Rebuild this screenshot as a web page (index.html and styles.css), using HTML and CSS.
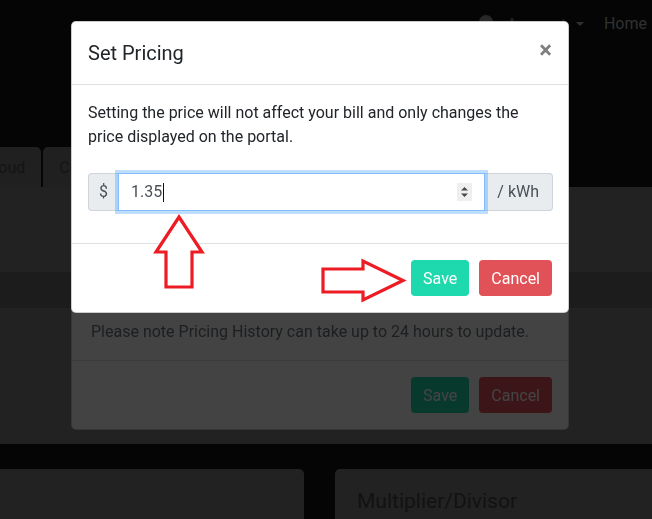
FILE: index.html
```html
<!DOCTYPE html>
<html lang="en">
<head>
<meta charset="utf-8">
<title>Set Pricing</title>
<link rel="stylesheet" href="styles.css">
</head>
<body>
<div class="page">
  <header class="navbar">
    <nav class="nav-right">
      <span class="user-icon"></span>
      <span class="nav-user">Account</span>
      <span class="caret"></span>
      <span class="nav-link">Home</span>
    </nav>
  </header>
  <div class="tabs">
    <div class="tab">Cloud</div>
    <div class="tab">Costs</div>
  </div>
  <section class="panel">
    <div class="panel-top"></div>
    <div class="panel-band"></div>
    <div class="panel-bottom"></div>
  </section>
  <div class="cards">
    <div class="card"></div>
    <div class="card"><h3 class="card-title">Multiplier/Divisor</h3></div>
  </div>
</div>

<div class="modal modal-back">
  <div class="modal-body back-body">
    <p class="note">Please note Pricing History can take up to 24 hours to update.</p>
  </div>
  <div class="modal-footer">
    <button class="btn btn-save">Save</button>
    <button class="btn btn-cancel">Cancel</button>
  </div>
</div>

<div class="backdrop"></div>

<div class="modal modal-front">
  <div class="modal-header">
    <h5 class="modal-title">Set Pricing</h5>
    <button class="close">&times;</button>
  </div>
  <div class="modal-body">
    <p class="intro">Setting the price will not affect your bill and only changes the price displayed on the portal.</p>
    <div class="input-group">
      <span class="addon addon-left">$</span>
      <div class="price-input">
        <span class="value">1.35</span><span class="text-caret"></span>
        <span class="spinner">
          <svg width="15" height="18" viewBox="0 0 15 18"><path d="M4 7.5 L7.5 4 L11 7.5 Z M4 10.5 L7.5 14 L11 10.5 Z" fill="#4a4a4a"/></svg>
        </span>
      </div>
      <span class="addon addon-right">/ kWh</span>
    </div>
  </div>
  <div class="modal-footer">
    <button class="btn btn-save">Save</button>
    <button class="btn btn-cancel">Cancel</button>
  </div>
</div>

<svg class="annotations" width="652" height="519" viewBox="0 0 652 519">
  <polygon points="179,217 202,252 192,252 192,287 166,287 166,252 156,252" fill="#fff" stroke="#ed1c24" stroke-width="3.2" stroke-linejoin="miter"/>
  <polygon points="323,269 363,269 363,261 403,280.5 363,300 363,292 323,292" fill="#fff" stroke="#ed1c24" stroke-width="3.2" stroke-linejoin="miter"/>
</svg>
</body>
</html>
```

FILE: styles.css
```css
* { box-sizing: border-box; }

html, body {
  margin: 0;
  padding: 0;
  width: 652px;
  height: 519px;
  overflow: hidden;
  background: #131313;
  font-family: Roboto, "Liberation Sans", Arial, sans-serif;
  font-size: 16px;
  color: #212529;
}

.page {
  display: flex;
  flex-direction: column;
}

/* page under backdrop (colors are pre-dim values) */
.navbar {
  height: 147px;
}

.nav-right {
  display: flex;
  align-items: center;
  justify-content: flex-end;
  height: 48px;
  padding-right: 5px;
  color: #b8b8b8;
}

.user-icon {
  width: 14px;
  height: 14px;
  border-radius: 50%;
  background: #9a9a9a;
  margin-right: 14px;
  margin-top: -4px;
}

.nav-user {
  margin-right: 10px;
  color: #8a8a8a;
}

.caret {
  width: 0;
  height: 0;
  border-left: 4px solid transparent;
  border-right: 4px solid transparent;
  border-top: 4px solid #b8b8b8;
  margin-right: 20px;
}

.nav-link {
  line-height: 24px;
}

.tabs {
  display: flex;
  gap: 2px;
  height: 40px;
  margin-left: -32px;
}

.tab {
  display: flex;
  align-items: center;
  padding: 0 16px;
  background: #7a7a7a;
  color: #4c4c4c;
  border-radius: 5px 5px 0 0;
}

.panel {
  display: flex;
  flex-direction: column;
  background: #838383;
}

.panel-top { height: 85px; }
.panel-band { height: 36px; background: #6c6c6c; }
.panel-bottom { height: 136px; }

.cards {
  display: flex;
  gap: 31px;
  margin-top: 25px;
  margin-left: -10px;
  margin-right: -10px;
}

.card {
  height: 60px;
  background: #838383;
  border-radius: 5px;
}

.card:first-child { flex: 0 0 314px; }
.card:last-child { flex: 1; padding: 20px 22px 0; }

.card-title {
  margin: 0;
  font-size: 21px;
  font-weight: 400;
  line-height: 1.2;
  color: #454545;
}

/* modals */
.backdrop {
  position: fixed;
  inset: 0;
  background: rgba(0, 0, 0, 0.737);
}

.modal {
  position: fixed;
  left: 71px;
  width: 498px;
  background: #fff;
  border: 1px solid rgba(0, 0, 0, 0.2);
  border-radius: 5px;
  display: flex;
  flex-direction: column;
}

.modal-front { top: 21px; }
.modal-back { top: 303px; }

.modal-header {
  display: flex;
  align-items: flex-start;
  padding: 16px;
  border-bottom: 1px solid #dee2e6;
}

.modal-title {
  margin: 0;
  font-size: 20px;
  font-weight: 400;
  line-height: 30px;
  color: #212529;
}

.close {
  margin: -16px -16px -16px auto;
  padding: 16px;
  background: transparent;
  border: 0;
  font-family: Roboto, "Liberation Sans", Arial, sans-serif;
  font-size: 24px;
  font-weight: 700;
  line-height: 1;
  color: #000;
  opacity: 0.5;
}

.modal-body {
  padding: 16px;
}

.intro {
  margin: 0 0 24px;
  line-height: 24px;
}

.back-body {
  padding: 16px 19px;
}

.note {
  margin: 0;
  line-height: 24px;
  color: #6c757d;
}

.input-group {
  display: flex;
  height: 38px;
  margin-bottom: 16px;
  margin-right: -1px;
}

.addon {
  display: flex;
  align-items: center;
  background: #e9ecef;
  border: 1px solid #ced4da;
  color: #495057;
  line-height: 24px;
}

.addon-left {
  padding: 0 10px;
  border-radius: 4px 0 0 4px;
  border-right: 0;
}

.addon-right {
  padding: 0 13px 0 12px;
  border-radius: 0 4px 4px 0;
  border-left: 0;
}

.price-input {
  flex: 1;
  display: flex;
  align-items: center;
  padding: 0 12px;
  border: 1px solid #80bdff;
  box-shadow: 0 0 0 3px rgba(0, 123, 255, 0.25);
  color: #495057;
  position: relative;
  z-index: 1;
  background: #fff;
}

.value {
  line-height: 24px;
}

.text-caret {
  width: 1px;
  height: 19px;
  background: #111;
  margin-left: 1px;
}

.spinner {
  margin-left: auto;
  display: flex;
  width: 15px;
  height: 18px;
  background: #efefef;
}

.modal-footer {
  display: flex;
  justify-content: flex-end;
  gap: 10px;
  padding: 16px;
  border-top: 1px solid #dee2e6;
}

.btn {
  height: 36px;
  padding: 0 12px;
  border: 0;
  border-radius: 4px;
  font-family: Roboto, "Liberation Sans", Arial, sans-serif;
  font-size: 16px;
  color: #fff;
}

.btn-save { background: #1dd9ad; }
.btn-cancel { background: #e05257; }

.annotations {
  position: fixed;
  left: 0;
  top: 0;
  pointer-events: none;
}
```
